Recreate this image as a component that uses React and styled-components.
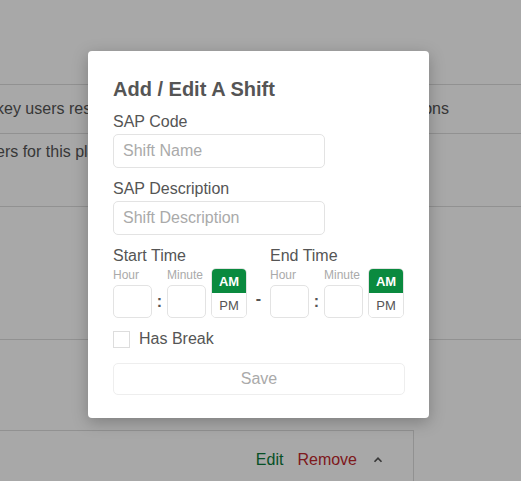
import React from 'react';
import styled, { createGlobalStyle } from 'styled-components';

const Global = createGlobalStyle`
  html, body { margin: 0; height: 100%; overflow: hidden; }
  body { font-family: "Liberation Sans", Arial, sans-serif; background: #fff; color: #555; }
`;

const Page = styled.div`
  position: relative;
  width: 521px;
  height: 481px;
  overflow: hidden;
`;

const Row = styled.div`
  box-sizing: border-box;
  height: ${p => p.h}px;
  border-bottom: 1px solid #ddd;
  display: flex;
  align-items: ${p => (p.top ? 'flex-start' : 'center')};
  padding-top: ${p => (p.top ? '9px' : '0')};
  font-size: 16px;
  color: #555;
  white-space: nowrap;
  margin-left: -4px;
  justify-content: space-between;
  padding-right: 72px;
`;

const LinkBlock = styled.div`
  box-sizing: border-box;
  height: 90px;
  padding-top: 10px;
`;

const Link = styled.a`
  color: #2a6ebb;
  text-decoration: underline;
  font-size: 16px;
  margin-left: -6px;
`;

const Card = styled.div`
  width: 414px;
  height: 60px;
  border: 1px solid #ddd;
  border-left: none;
  display: flex;
  align-items: center;
  justify-content: flex-end;
  gap: 14px;
  padding-right: 28px;
  box-sizing: border-box;
  font-size: 16px;
`;

const Action = styled.span`
  color: ${p => p.c};
`;

const Overlay = styled.div`
  position: absolute;
  inset: 0;
  background: rgba(0, 0, 0, 0.34);
`;

const Modal = styled.div`
  position: absolute;
  left: 88px;
  top: 51px;
  width: 341px;
  height: 367px;
  box-sizing: border-box;
  background: #fff;
  border-radius: 4px;
  box-shadow: 0 4px 16px rgba(0, 0, 0, 0.25);
  padding: 26px 24px 0 25px;
  display: flex;
  flex-direction: column;
`;

const Title = styled.h2`
  margin: 0 0 11px;
  font-size: 20px;
  font-weight: bold;
  color: #555;
  line-height: 24px;
`;

const Label = styled.div`
  font-size: 16px;
  line-height: 20px;
  color: #555;
  margin-bottom: 2px;
`;

const TextInput = styled.input`
  width: 212px;
  height: 34px;
  box-sizing: border-box;
  border: 1px solid #e3e3e3;
  border-radius: 5px;
  padding: 0 9px;
  font: 16px "Liberation Sans", Arial, sans-serif;
  margin-bottom: 11px;
  &::placeholder { color: #aaa; }
`;

const TimeRow = styled.div`
  display: flex;
  align-items: flex-start;
`;

const TimeGroup = styled.div`
  display: flex;
  flex-direction: column;
`;

const Fields = styled.div`
  display: flex;
  align-items: flex-end;
`;

const Field = styled.div`
  display: flex;
  flex-direction: column;
`;

const Small = styled.div`
  font-size: 12px;
  color: #aaa;
  height: 17px;
`;

const Box = styled.input`
  width: 39px;
  height: 33px;
  box-sizing: border-box;
  border: 1px solid #e3e3e3;
  border-radius: 5px;
`;

const Sep = styled.span`
  width: 15px;
  text-align: center;
  font-weight: bold;
  font-size: 16px;
  color: #555;
  line-height: 33px;
`;

const Meridiem = styled.div`
  width: 36px;
  height: 50px;
  margin-left: 5px;
  border: 1px solid #e3e3e3;
  border-radius: 5px;
  box-sizing: border-box;
  display: flex;
  flex-direction: column;
  overflow: hidden;
`;

const MBtn = styled.div`
  flex: 1;
  display: flex;
  align-items: center;
  justify-content: center;
  font-size: 13px;
  background: ${p => (p.active ? '#0a8a3f' : '#fff')};
  color: ${p => (p.active ? '#fff' : '#555')};
  font-weight: ${p => (p.active ? 'bold' : 'normal')};
`;

const Dash = styled.span`
  width: 23px;
  text-align: center;
  font-weight: bold;
  color: #555;
  align-self: flex-end;
  line-height: 33px;
  margin-bottom: 3px;
`;

const Check = styled.label`
  display: flex;
  align-items: center;
  gap: 9px;
  font-size: 16px;
  margin-top: 12px;
  span.box {
    width: 15px;
    height: 15px;
    border: 1px solid #ddd;
  }
`;

const Save = styled.button`
  margin-top: 15px;
  width: 292px;
  height: 32px;
  background: #fff;
  border: 1px solid #eee;
  border-radius: 5px;
  color: #aaa;
  font: 16px "Liberation Sans", Arial, sans-serif;
`;

const Time = ({ label }) => (
  <TimeGroup>
    <Label>{label}</Label>
    <Fields>
      <Field><Small>Hour</Small><Box /></Field>
      <Sep>:</Sep>
      <Field><Small>Minute</Small><Box /></Field>
      <Meridiem>
        <MBtn active>AM</MBtn>
        <MBtn>PM</MBtn>
      </Meridiem>
    </Fields>
  </TimeGroup>
);

export default function App() {
  return (
    <Page>
      <Global />
      <Row h={85} />
      <Row h={49}><span>key users responsible</span><span>ons</span></Row>
      <Row h={73} top><span>ers for this plant</span></Row>
      <Row h={133} />
      <LinkBlock><Link>t</Link></LinkBlock>
      <Card>
        <Action c="#0a7a3a">Edit</Action>
        <Action c="#c0282d">Remove</Action>
        <svg width="14" height="14" viewBox="0 0 24 24" fill="none" stroke="#555" strokeWidth="3"><path d="M6 15l6-6 6 6" /></svg>
      </Card>
      <Overlay />
      <Modal>
        <Title>Add / Edit A Shift</Title>
        <Label>SAP Code</Label>
        <TextInput placeholder="Shift Name" />
        <Label>SAP Description</Label>
        <TextInput placeholder="Shift Description" />
        <TimeRow>
          <Time label="Start Time" />
          <Dash>-</Dash>
          <Time label="End Time" />
        </TimeRow>
        <Check><span className="box" />Has Break</Check>
        <Save>Save</Save>
      </Modal>
    </Page>
  );
}
